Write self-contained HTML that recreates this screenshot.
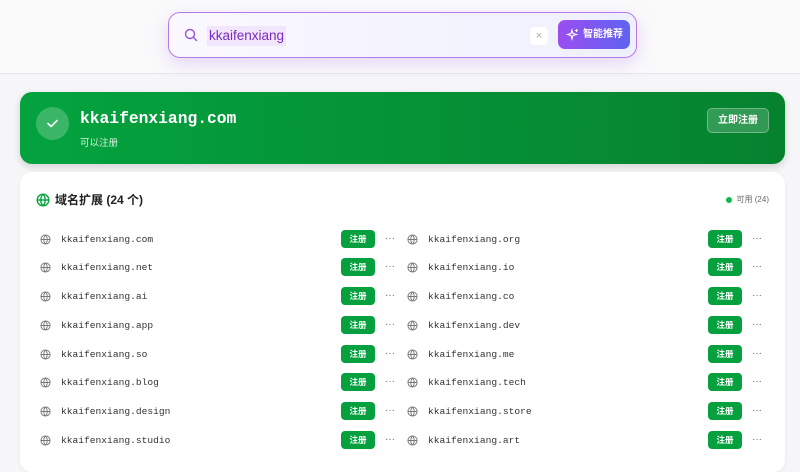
<!DOCTYPE html>
<html><head><meta charset="utf-8"><style>
*{box-sizing:border-box;margin:0;padding:0}
body{width:800px;height:455px;overflow:hidden;background:#f6f6f8;font-family:"Liberation Sans","Noto Sans CJK SC",sans-serif;position:relative}
.hdr{position:absolute;left:0;top:0;width:800px;height:74px;background:#fafafb;border-bottom:1px solid #e6e6ea}
.search{position:absolute;left:168px;top:12px;width:469px;height:46px;border:1.5px solid #b57ae8;border-radius:12px;background:linear-gradient(90deg,#fbf8ff,#eef0fd);box-shadow:0 6px 18px rgba(170,110,240,.25)}
.search .q{position:absolute;left:15px;top:15px}
.search .t{position:absolute;left:38px;top:13px;font-size:13.5px;color:#7a2bbf;background:#f1e6fb;padding:1px 2px;line-height:18px}
.x{position:absolute;left:361px;top:14px;width:18px;height:18px;background:#fff;border-radius:4px;color:#aaa;font-size:11px;text-align:center;line-height:18px}
.ai{position:absolute;left:389px;top:7px;width:72px;height:29px;border-radius:7px;background:linear-gradient(90deg,#9b4ef0,#5f63f0);color:#fff;font-size:10px;font-weight:bold;line-height:29px;padding-left:25px}
.ai svg{position:absolute;left:8px;top:8px}
.green{position:absolute;left:20px;top:92px;width:765px;height:72px;border-radius:12px;background:linear-gradient(90deg,#04a33f,#06822f);box-shadow:0 3px 8px rgba(0,0,0,.15)}
.chk{position:absolute;left:16px;top:15px;width:33px;height:33px;border-radius:50%;background:rgba(255,255,255,.22)}
.chk svg{position:absolute;left:9px;top:9px}
.dn{position:absolute;left:60px;top:17px;color:#fff;font-family:"Liberation Mono",monospace;font-weight:bold;font-size:16.3px}
.sub{position:absolute;left:60px;top:43px;color:#d6f3df;font-size:9.5px}
.reg{position:absolute;left:687px;top:16px;width:62px;height:25px;border-radius:5px;background:rgba(255,255,255,.18);border:1px solid rgba(255,255,255,.3);color:#fff;font-size:10px;font-weight:bold;text-align:center;line-height:23px}
.card{position:absolute;left:20px;top:172px;width:765px;height:300px;background:#fff;border-radius:12px;box-shadow:0 1px 4px rgba(0,0,0,.06)}
.ttl{position:absolute;left:16px;top:19px;font-size:12px;font-weight:bold;color:#222;display:flex;align-items:center;gap:5px}
.av{position:absolute;right:16px;top:22px;font-size:8px;color:#666;display:flex;align-items:center;gap:5px}
.av i{width:6px;height:6px;border-radius:50%;background:#0bbb45;display:block}
.row{position:absolute;height:20px;width:360px}
.row svg{position:absolute;left:-6px;top:4px}
.row .n{position:absolute;left:15px;top:4px;font-family:"Liberation Mono",monospace;font-size:9.6px;color:#333}
.row .b{position:absolute;left:295px;top:0px;width:34px;height:18px;border-radius:4px;background:#06a13e;color:#fff;font-size:8.5px;font-weight:bold;text-align:center;line-height:18px}
.row .d{position:absolute;left:339px;top:3px;font-size:10px;color:#666}
</style></head><body>
<div class="hdr"><div class="search">
<svg class="q" width="14" height="14" viewBox="0 0 14 14"><circle cx="6" cy="6" r="4.5" fill="none" stroke="#9a52d6" stroke-width="1.4"/><path d="M9.3 9.3L12.5 12.5" stroke="#9a52d6" stroke-width="1.4" stroke-linecap="round"/></svg>
<span class="t">kkaifenxiang</span>
<div class="x">×</div>
<div class="ai"><svg width="13" height="13" viewBox="0 0 13 13" fill="none" stroke="#fff" stroke-width="1.1"><path d="M6 2L7 5.5L10.5 6.5L7 7.5L6 11L5 7.5L1.5 6.5L5 5.5Z"/><path d="M10.5 1v3M9 2.5h3"/></svg>智能推荐</div>
</div></div>
<div class="green"><div class="chk"><svg width="15" height="15" viewBox="0 0 15 15"><path d="M3 7.5L6.2 10.5L12 4.5" fill="none" stroke="#fff" stroke-width="1.6" stroke-linecap="round" stroke-linejoin="round"/></svg></div>
<div class="dn">kkaifenxiang.com</div><div class="sub">可以注册</div><div class="reg">立即注册</div></div>
<div class="card">
<div class="ttl"><svg width="14" height="14" viewBox="0 0 14 14" fill="none" stroke="#08a540" stroke-width="1.4"><circle cx="7" cy="7" r="5.8"/><path d="M1.2 7h11.6M7 1.2c-3 3.2-3 8.4 0 11.6M7 1.2c3 3.2 3 8.4 0 11.6"/></svg>域名扩展 (24 个)</div>
<div class="av"><i></i>可用 (24)</div>
</div>

<div class="row" style="left:46px;top:230px"><svg width="11" height="11" viewBox="0 0 12 12" fill="none" stroke="#777" stroke-width="1"><circle cx="6" cy="6" r="5"/><path d="M1 6h10M6 1c-2.5 2.8-2.5 7.2 0 10M6 1c2.5 2.8 2.5 7.2 0 10"/></svg><span class="n">kkaifenxiang.com</span><span class="b">注册</span><span class="d">···</span></div>
<div class="row" style="left:413px;top:230px"><svg width="11" height="11" viewBox="0 0 12 12" fill="none" stroke="#777" stroke-width="1"><circle cx="6" cy="6" r="5"/><path d="M1 6h10M6 1c-2.5 2.8-2.5 7.2 0 10M6 1c2.5 2.8 2.5 7.2 0 10"/></svg><span class="n">kkaifenxiang.org</span><span class="b">注册</span><span class="d">···</span></div>
<div class="row" style="left:46px;top:258px"><svg width="11" height="11" viewBox="0 0 12 12" fill="none" stroke="#777" stroke-width="1"><circle cx="6" cy="6" r="5"/><path d="M1 6h10M6 1c-2.5 2.8-2.5 7.2 0 10M6 1c2.5 2.8 2.5 7.2 0 10"/></svg><span class="n">kkaifenxiang.net</span><span class="b">注册</span><span class="d">···</span></div>
<div class="row" style="left:413px;top:258px"><svg width="11" height="11" viewBox="0 0 12 12" fill="none" stroke="#777" stroke-width="1"><circle cx="6" cy="6" r="5"/><path d="M1 6h10M6 1c-2.5 2.8-2.5 7.2 0 10M6 1c2.5 2.8 2.5 7.2 0 10"/></svg><span class="n">kkaifenxiang.io</span><span class="b">注册</span><span class="d">···</span></div>
<div class="row" style="left:46px;top:287px"><svg width="11" height="11" viewBox="0 0 12 12" fill="none" stroke="#777" stroke-width="1"><circle cx="6" cy="6" r="5"/><path d="M1 6h10M6 1c-2.5 2.8-2.5 7.2 0 10M6 1c2.5 2.8 2.5 7.2 0 10"/></svg><span class="n">kkaifenxiang.ai</span><span class="b">注册</span><span class="d">···</span></div>
<div class="row" style="left:413px;top:287px"><svg width="11" height="11" viewBox="0 0 12 12" fill="none" stroke="#777" stroke-width="1"><circle cx="6" cy="6" r="5"/><path d="M1 6h10M6 1c-2.5 2.8-2.5 7.2 0 10M6 1c2.5 2.8 2.5 7.2 0 10"/></svg><span class="n">kkaifenxiang.co</span><span class="b">注册</span><span class="d">···</span></div>
<div class="row" style="left:46px;top:316px"><svg width="11" height="11" viewBox="0 0 12 12" fill="none" stroke="#777" stroke-width="1"><circle cx="6" cy="6" r="5"/><path d="M1 6h10M6 1c-2.5 2.8-2.5 7.2 0 10M6 1c2.5 2.8 2.5 7.2 0 10"/></svg><span class="n">kkaifenxiang.app</span><span class="b">注册</span><span class="d">···</span></div>
<div class="row" style="left:413px;top:316px"><svg width="11" height="11" viewBox="0 0 12 12" fill="none" stroke="#777" stroke-width="1"><circle cx="6" cy="6" r="5"/><path d="M1 6h10M6 1c-2.5 2.8-2.5 7.2 0 10M6 1c2.5 2.8 2.5 7.2 0 10"/></svg><span class="n">kkaifenxiang.dev</span><span class="b">注册</span><span class="d">···</span></div>
<div class="row" style="left:46px;top:345px"><svg width="11" height="11" viewBox="0 0 12 12" fill="none" stroke="#777" stroke-width="1"><circle cx="6" cy="6" r="5"/><path d="M1 6h10M6 1c-2.5 2.8-2.5 7.2 0 10M6 1c2.5 2.8 2.5 7.2 0 10"/></svg><span class="n">kkaifenxiang.so</span><span class="b">注册</span><span class="d">···</span></div>
<div class="row" style="left:413px;top:345px"><svg width="11" height="11" viewBox="0 0 12 12" fill="none" stroke="#777" stroke-width="1"><circle cx="6" cy="6" r="5"/><path d="M1 6h10M6 1c-2.5 2.8-2.5 7.2 0 10M6 1c2.5 2.8 2.5 7.2 0 10"/></svg><span class="n">kkaifenxiang.me</span><span class="b">注册</span><span class="d">···</span></div>
<div class="row" style="left:46px;top:373px"><svg width="11" height="11" viewBox="0 0 12 12" fill="none" stroke="#777" stroke-width="1"><circle cx="6" cy="6" r="5"/><path d="M1 6h10M6 1c-2.5 2.8-2.5 7.2 0 10M6 1c2.5 2.8 2.5 7.2 0 10"/></svg><span class="n">kkaifenxiang.blog</span><span class="b">注册</span><span class="d">···</span></div>
<div class="row" style="left:413px;top:373px"><svg width="11" height="11" viewBox="0 0 12 12" fill="none" stroke="#777" stroke-width="1"><circle cx="6" cy="6" r="5"/><path d="M1 6h10M6 1c-2.5 2.8-2.5 7.2 0 10M6 1c2.5 2.8 2.5 7.2 0 10"/></svg><span class="n">kkaifenxiang.tech</span><span class="b">注册</span><span class="d">···</span></div>
<div class="row" style="left:46px;top:402px"><svg width="11" height="11" viewBox="0 0 12 12" fill="none" stroke="#777" stroke-width="1"><circle cx="6" cy="6" r="5"/><path d="M1 6h10M6 1c-2.5 2.8-2.5 7.2 0 10M6 1c2.5 2.8 2.5 7.2 0 10"/></svg><span class="n">kkaifenxiang.design</span><span class="b">注册</span><span class="d">···</span></div>
<div class="row" style="left:413px;top:402px"><svg width="11" height="11" viewBox="0 0 12 12" fill="none" stroke="#777" stroke-width="1"><circle cx="6" cy="6" r="5"/><path d="M1 6h10M6 1c-2.5 2.8-2.5 7.2 0 10M6 1c2.5 2.8 2.5 7.2 0 10"/></svg><span class="n">kkaifenxiang.store</span><span class="b">注册</span><span class="d">···</span></div>
<div class="row" style="left:46px;top:431px"><svg width="11" height="11" viewBox="0 0 12 12" fill="none" stroke="#777" stroke-width="1"><circle cx="6" cy="6" r="5"/><path d="M1 6h10M6 1c-2.5 2.8-2.5 7.2 0 10M6 1c2.5 2.8 2.5 7.2 0 10"/></svg><span class="n">kkaifenxiang.studio</span><span class="b">注册</span><span class="d">···</span></div>
<div class="row" style="left:413px;top:431px"><svg width="11" height="11" viewBox="0 0 12 12" fill="none" stroke="#777" stroke-width="1"><circle cx="6" cy="6" r="5"/><path d="M1 6h10M6 1c-2.5 2.8-2.5 7.2 0 10M6 1c2.5 2.8 2.5 7.2 0 10"/></svg><span class="n">kkaifenxiang.art</span><span class="b">注册</span><span class="d">···</span></div>
</body></html>
